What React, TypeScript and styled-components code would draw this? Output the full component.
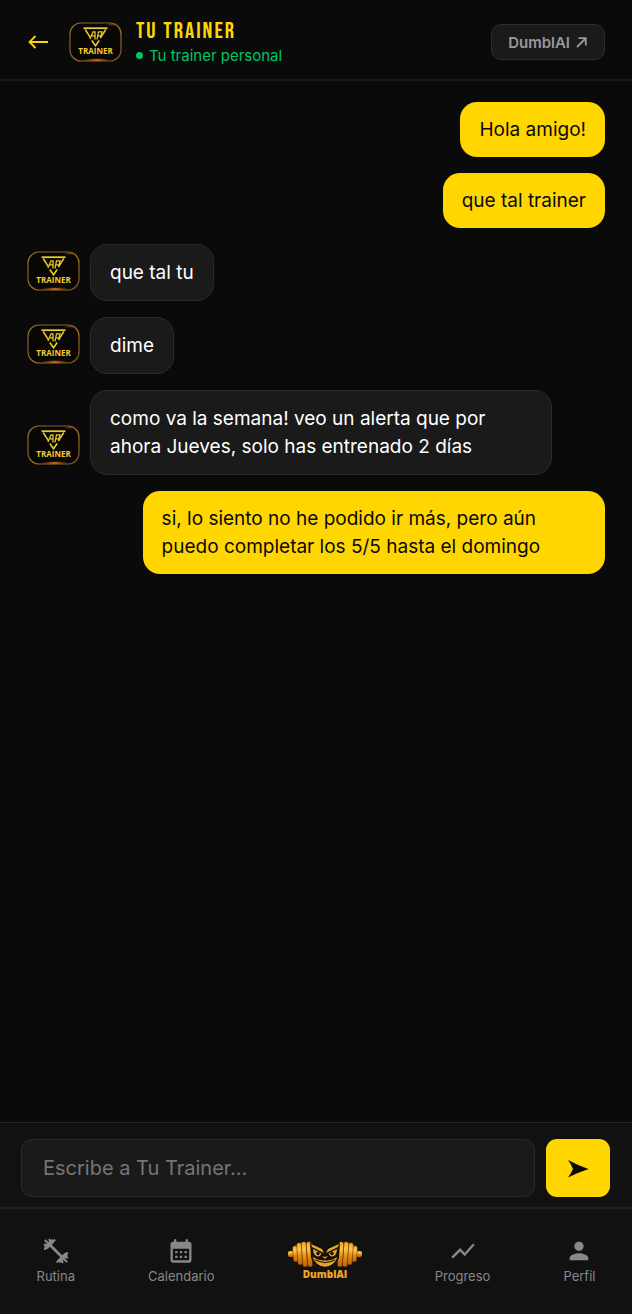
import React from "react";
import styled, { createGlobalStyle } from "styled-components";
import { MdCalendarMonth, MdPerson, MdShowChart } from "react-icons/md";

const GlobalStyle = createGlobalStyle`
  *, *::before, *::after { box-sizing: border-box; }
  body {
    margin: 0;
    background: #0a0a0a;
    color: #fff;
    font-family: Inter, "Liberation Sans", sans-serif;
  }
  button, input { font: inherit; }
`;

const Screen = styled.div`
  display: flex;
  flex-direction: column;
  min-height: 100vh;
`;

const Header = styled.header`
  display: flex;
  align-items: center;
  padding: 18px 27px 13px;
  border-bottom: 2px solid #1a1a1a;
`;

const BackButton = styled.button`
  display: flex;
  padding: 0;
  margin-right: 20px;
  border: 0;
  background: none;
  color: #ffd600;
`;

const Heading = styled.div`
  flex: 1;
  margin-left: 14px;
`;

const Title = styled.h1`
  margin: 0 0 1px;
  color: #ffd600;
  font-family: "Bebas Neue", "Roboto Condensed", Roboto, sans-serif;
  font-size: 23px;
  font-weight: 400;
  line-height: 26px;
  letter-spacing: 2px;
  text-transform: uppercase;
`;

const Status = styled.p`
  display: flex;
  align-items: center;
  gap: 6px;
  margin: 0;
  color: #00c566;
  font-size: 15px;
  line-height: 21px;
`;

const Dot = styled.span`
  width: 7px;
  height: 7px;
  border-radius: 50%;
  background: currentColor;
`;

const SwitchButton = styled.button`
  display: flex;
  align-items: center;
  gap: 6px;
  height: 36px;
  padding: 0 16px;
  border: 1px solid #2c2c2c;
  border-radius: 10px;
  background: #1a1a1a;
  color: #999;
  font-size: 15px;
  font-weight: 600;
`;

const Messages = styled.main`
  flex: 1;
  display: flex;
  flex-direction: column;
  gap: 16px;
  padding: 21px 27px;
`;

const MessageRow = styled.div<{ $mine: boolean }>`
  display: flex;
  align-items: flex-end;
  justify-content: ${(p) => (p.$mine ? "flex-end" : "flex-start")};
  gap: 10px;
`;

const AvatarSlot = styled.div`
  display: flex;
  padding-bottom: 10px;
`;

const Bubble = styled.p<{ $mine: boolean }>`
  max-width: 80%;
  margin: 0;
  padding: 14px 19px 13px;
  border: ${(p) => (p.$mine ? "0" : "1px solid #2a2a2a")};
  border-radius: 17px;
  background: ${(p) => (p.$mine ? "#ffd600" : "#1a1a1a")};
  color: ${(p) => (p.$mine ? "#0a0a0a" : "#fff")};
  font-size: 19px;
  line-height: 28px;
`;

const Composer = styled.form`
  display: flex;
  gap: 11px;
  padding: 16px 22px 10px 21px;
  border-top: 1px solid #222;
  background: #111;
`;

const MessageInput = styled.input`
  flex: 1;
  min-width: 0;
  height: 58px;
  padding: 0 21px;
  border: 1px solid #2a2a2a;
  border-radius: 11px;
  background: #1a1a1a;
  color: #fff;
  font-size: 20px;
  &::placeholder { color: #757575; opacity: 1; }
`;

const SendButton = styled.button`
  display: flex;
  align-items: center;
  justify-content: center;
  width: 64px;
  height: 58px;
  padding: 0;
  border: 0;
  border-radius: 11px;
  background: #ffd600;
  color: #0a0a0a;
`;

const TabBar = styled.nav`
  display: flex;
  justify-content: space-around;
  padding: 28px 0 29px;
  border-top: 2px solid #202020;
  background: #111;
`;

const Tab = styled.a`
  display: flex;
  flex-direction: column;
  align-items: center;
  gap: 2px;
  color: #888;
  font-size: 13px;
  line-height: 18px;
  text-decoration: none;
`;

const TrainerLogo = () => (
  <svg width="53" height="40" viewBox="0 0 53 40" role="img" aria-label="Trainer">
    <defs>
      <linearGradient id="rim" x1="0" y1="0" x2="1" y2="1">
        <stop offset="0" stopColor="#8a7428" />
        <stop offset="0.35" stopColor="#7a6424" />
        <stop offset="0.6" stopColor="#a46b22" />
        <stop offset="1" stopColor="#6d5720" />
      </linearGradient>
      <radialGradient id="ember">
        <stop offset="0" stopColor="#ff9a35" />
        <stop offset="0.4" stopColor="#b95a10" stopOpacity="0.7" />
        <stop offset="1" stopColor="#7a3500" stopOpacity="0" />
      </radialGradient>
    </defs>
    <rect x="1" y="1" width="51" height="38" rx="11" fill="#070605" stroke="url(#rim)" strokeWidth="1.2" />
    <ellipse cx="28" cy="38" rx="15" ry="2" fill="url(#ember)" />
    <ellipse cx="43" cy="2.5" rx="8" ry="2" fill="url(#ember)" opacity="0.4" />
    <g fill="none" stroke="#e9c92b">
      <path d="M14.5 6.2H38.5" strokeWidth="1.8" />
      <path d="M16.2 7.5L21.5 15.8M36.8 7.5L31.5 15.8" strokeWidth="1.5" />
      <path d="M21 17L24 9.8H26V17.5M23 13.8H26M28 17.5L29.5 9.8H33L31.5 16M28.7 13.8H32" strokeWidth="1.3" />
      <path d="M22.8 18.5L26.5 23.8L30.2 18.5" strokeWidth="1.6" />
    </g>
    <text x="26.5" y="32" textAnchor="middle" fill="#f2cd2e" fontFamily="Open Sans, sans-serif" fontSize="8" fontWeight="700">TRAINER</text>
  </svg>
);

const plates = [
  [5, 6, 16],
  [9.3, 3, 22],
  [14, 2, 25],
  [19, 2, 25],
];

const PlateStack = () => (
  <g>
    <rect x="0" y="11" width="6" height="6" rx="2" fill="url(#gold)" />
    {plates.map(([x, y, h]) => (
      <rect key={x} x={x} y={y} width="4.8" height={h} rx="2" fill="url(#gold)" stroke="#5b2c00" strokeWidth="0.5" transform={`rotate(-4 ${x} 14)`} />
    ))}
  </g>
);

const DumblLogo = () => (
  <svg width="74" height="45" viewBox="0 -3 74 45" role="img" aria-label="DumblAI">
    <defs>
      <linearGradient id="gold" x1="0" y1="0" x2="0" y2="1">
        <stop offset="0" stopColor="#f5a623" />
        <stop offset="0.3" stopColor="#ffc44a" />
        <stop offset="0.6" stopColor="#e58a12" />
        <stop offset="1" stopColor="#b96307" />
      </linearGradient>
    </defs>
    <PlateStack />
    <g transform="translate(74 0) scale(-1 1)"><PlateStack /></g>
    <path d="M22 3L35 9H39L52 3L51 18Q46 27 37 28Q28 27 23 18Z" fill="#171006" />
    <g fill="#e5a62c">
      <path d="M23 4L34 9L36 13L33 11.5L24 7ZM51 4L40 9L38 13L41 11.5L50 7Z" />
      <path d="M25 9L33.5 13.5Q32 17.5 28 16Q25 14 25 9ZM49 9L40.5 13.5Q42 17.5 46 16Q49 14 49 9Z" />
      <path d="M24.5 17Q31 21 37 20.5Q43 21 49.5 17Q46 26 37 26.8Q28 26 24.5 17Z" />
      <path d="M34 16L37 17L40 16L37 19Z" />
    </g>
    <circle cx="30" cy="13.5" r="1.7" fill="#171006" />
    <circle cx="44" cy="13.5" r="1.7" fill="#171006" />
    <path d="M27 19.8Q37 25.5 47 19.8" fill="none" stroke="#3b2003" strokeWidth="1.3" />
    <text x="37" y="38" textAnchor="middle" fill="#f5a623" fontFamily="Open Sans, sans-serif" fontSize="10" fontWeight="800">DumblAI</text>
  </svg>
);

const ArrowLeft = () => (
  <svg width="22" height="16" viewBox="0 0 22 16" fill="none" stroke="currentColor" strokeWidth="1.8" aria-hidden="true">
    <path d="M21 8H3M8.5 2L2.5 8L8.5 14" />
  </svg>
);

const ArrowUpRight = () => (
  <svg width="12" height="12" viewBox="0 0 12 12" fill="none" stroke="currentColor" strokeWidth="1.8" aria-hidden="true">
    <path d="M1 11L9 3M2.5 2.2H9.8V9.5" />
  </svg>
);

const SendArrow = () => (
  <svg width="22" height="20" viewBox="0 0 22 20" fill="currentColor" aria-hidden="true">
    <path d="M1 2Q11 7.5 21.5 11Q11 14.5 1 19.5Q4 15.5 6 11Q4 6 1 2Z" />
  </svg>
);

const Barbell = () => (
  <svg width="28" height="28" viewBox="0 0 28 28" fill="none" stroke="currentColor" strokeLinecap="round" aria-hidden="true">
    <path d="M8 8L20 20" strokeWidth="2.8" />
    <path d="M4.5 10L10 4.5M18 23.5L23.5 18" strokeWidth="4.4" />
    <path d="M2.8 12L5 10M2.6 7.5L6 8.5M3.4 3.5L8 8M7.5 2.6L8.5 6M10 5L12.8 3.2M15.2 24.8L18 23M20.5 25.4L19.5 22M20 20L24.6 24.5M25.4 20.5L22 19.5M23 18L25.2 16" strokeWidth="2" />
  </svg>
);

const messages = [
  { mine: true, text: "Hola amigo!" },
  { mine: true, text: "que tal trainer" },
  { mine: false, text: "que tal tu" },
  { mine: false, text: "dime" },
  { mine: false, text: "como va la semana! veo un alerta que por ahora Jueves, solo has entrenado 2 días" },
  { mine: true, text: "si, lo siento no he podido ir más, pero aún puedo completar los 5/5 hasta el domingo" },
];

export default function App() {
  return (
    <Screen>
      <GlobalStyle />
      <Header>
        <BackButton type="button" aria-label="Volver"><ArrowLeft /></BackButton>
        <TrainerLogo />
        <Heading>
          <Title>Tu Trainer</Title>
          <Status><Dot />Tu trainer personal</Status>
        </Heading>
        <SwitchButton type="button">DumblAI <ArrowUpRight /></SwitchButton>
      </Header>
      <Messages>
        {messages.map(({ mine, text }) => (
          <MessageRow key={text} $mine={mine}>
            {!mine && <AvatarSlot><TrainerLogo /></AvatarSlot>}
            <Bubble $mine={mine}>{text}</Bubble>
          </MessageRow>
        ))}
      </Messages>
      <Composer onSubmit={(e) => e.preventDefault()}>
        <MessageInput type="text" aria-label="Mensaje" placeholder="Escribe a Tu Trainer..." />
        <SendButton type="submit" aria-label="Enviar"><SendArrow /></SendButton>
      </Composer>
      <TabBar>
        <Tab href="#rutina"><Barbell />Rutina</Tab>
        <Tab href="#calendario"><MdCalendarMonth size={28} />Calendario</Tab>
        <Tab href="#dumblai"><DumblLogo /></Tab>
        <Tab href="#progreso"><MdShowChart size={28} />Progreso</Tab>
        <Tab href="#perfil"><MdPerson size={28} />Perfil</Tab>
      </TabBar>
    </Screen>
  );
}
